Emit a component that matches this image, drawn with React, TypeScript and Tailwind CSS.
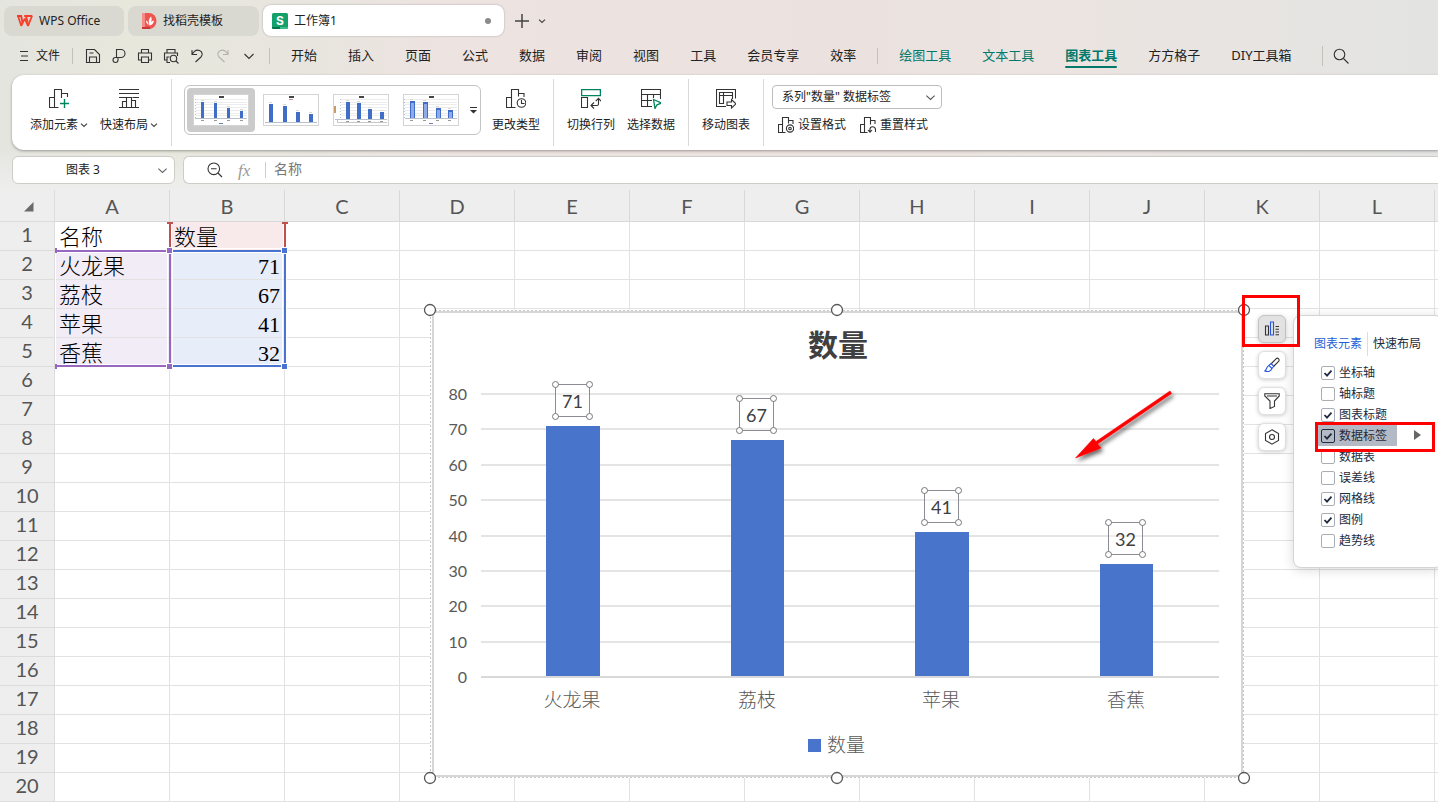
import React from "react";

const UI = "font-['Noto_Sans','Noto_Sans_CJK_SC',sans-serif]";

type Kids = { children: React.ReactNode };

function Ico({ size = 20, stroke = "#333", className = "", children }: Kids & { size?: number; stroke?: string; className?: string }) {
  return (
    <svg aria-hidden="true" width={size} height={size} viewBox={`0 0 ${size} ${size}`} fill="none" stroke={stroke} strokeWidth="1.1" className={`shrink-0 ${className}`}>
      {children}
    </svg>
  );
}

function Chevron({ size = 8, stroke = "#444" }: { size?: number; stroke?: string }) {
  return (
    <svg aria-hidden="true" width={size} height={size} viewBox="0 0 8 8" fill="none" stroke={stroke} strokeWidth={size > 8 ? 0.8 : 1.2} className="shrink-0">
      <path d="M1 2.6 4 5.4 7 2.6" />
    </svg>
  );
}

/* ---------- title tabs ---------- */

function TitleTabs() {
  return (
    <div className="flex h-9 items-end gap-1 pl-1 text-xs text-[#222]">
      <button className="flex h-[30px] w-[120px] items-center gap-1.5 rounded-lg bg-[#d9d9d2] pl-[13px]">
        <svg aria-hidden="true" width="16" height="12" viewBox="0 0 16 12" className="shrink-0" fill="none" strokeWidth="1.8">
          <path d="M0 1h4.2L5.6 8" stroke="#f5382c" />
          <path d="M1 .8 4.2 10.8 7.8 3.6 11 10.8 15 1H7.2" stroke="#f6402b" strokeLinejoin="bevel" />
          <path d="M9 1.2 10.8 7.6" stroke="#f6402b" />
        </svg>
        WPS Office
      </button>
      <button className="flex h-[30px] w-[131px] items-center gap-1.5 rounded-lg bg-[#d9d8d1] pl-[14px]">
        <svg aria-hidden="true" width="15" height="16" viewBox="0 0 15 16" className="shrink-0">
          <path d="M0 0h7a7.5 8 0 0 1 0 16H0z" fill="#f0544f" />
          <path d="M0 0h3v16H0z" fill="#f58c88" />
          <path d="M0 14h8v2H0z" fill="#c93936" />
          <path d="M7.6 12.5C6 9.5 6.500 6 9 3.500c1 2 .8 4 0 5.500 1-.9 1.800-1.300 3-1.500-.4 3-2 4.800-4.400 5z" fill="#fff" />
          <path d="M6.500 12C5 11 4.200 9.500 4 7.500c1.400.5 2.200 2 2.500 4.500z" fill="#fff" />
        </svg>
        找稻壳模板
      </button>
      <button className="flex h-[31px] w-[241px] items-center gap-1.5 rounded-lg bg-white pr-[13px] pl-[9px] shadow-[0_0_2px_rgba(0,0,0,0.3)]">
        <svg aria-hidden="true" width="16" height="16" viewBox="0 0 16 16" className="shrink-0">
          <rect width="16" height="16" rx="1.500" fill="#14a06b" />
          <path d="M0 14h8v2H1.500A1.500 1.500 0 0 1 0 14.500z" fill="#07734b" />
          <path d="M8 14h8v.5a1.500 1.500 0 0 1-1.500 1.500H8z" fill="#3dba8a" />
          <text x="8" y="11.500" textAnchor="middle" fill="#fff" className="font-['Inter',sans-serif] text-[12px] font-bold">S</text>
        </svg>
        <span className="flex-1 text-left">工作簿1</span>
        <span className="size-1.5 rounded-full bg-[#8a8a8a]" />
      </button>
      <button aria-label="新建" className="ml-1 flex h-[30px] w-5 items-center justify-center">
        <svg aria-hidden="true" width="14" height="14" viewBox="0 0 14 14" stroke="#444" strokeWidth="1.5"><path d="M7 0v14M0 7h14" /></svg>
      </button>
      <button aria-label="标签列表" className="flex h-[30px] w-3 items-center justify-center"><Chevron /></button>
    </div>
  );
}

/* ---------- menu bar ---------- */

const quickIcons: { label: string; icon: React.ReactNode }[] = [
  { label: "保存", icon: <Ico size={16}><path d="M1.500 1.500h8l5 5v8h-13zM4.500 14.500V9h7v5.500M4.500 5h4" /></Ico> },
  { label: "输出", icon: <Ico size={16}><path d="M5.500 9.500V1.500h4.500a4 4 0 0 1 0 8H4.500a2.500 2.500 0 1 0 2.500 2.500V9.500" /></Ico> },
  { label: "打印", icon: <Ico size={16}><path d="M4.500 5V1.500h7V5M4.500 12h-3V5h13v7h-3M4.500 9h7v5.500h-7z" /></Ico> },
  { label: "打印预览", icon: <Ico size={16}><path d="M4 5V1.500h8V5M4 12H1.500V5h13v3M7 14.500H4V9h2.500" /><circle cx="10.500" cy="10.500" r="3.200" /><path d="m13 13 2.500 2.500" /></Ico> },
  { label: "撤销", icon: <Ico size={16}><path d="M3 2v4.500h5M3 6.500C5 3 8 1.500 10.500 2.500c3 1.200 3.500 4.500 1.500 6.500l-5.500 5" /></Ico> },
  { label: "恢复", icon: <Ico size={16} stroke="#b4b2ae"><path d="M13 2v4.500H8M13 6.500C11 3 8 1.500 5.500 2.500c-3 1.200-3.500 4.500-1.500 6.500l5.500 5" /></Ico> },
  { label: "更多", icon: <Ico size={16}><path d="m3.500 6 4.500 4.500L12.500 6" /></Ico> },
];

const menus = ["开始", "插入", "页面", "公式", "数据", "审阅", "视图", "工具", "会员专享", "效率"];

function MenuBar() {
  return (
    <div className="flex h-[39px] items-center text-[13px] whitespace-nowrap text-[#222]">
      <button className="ml-5 flex items-center gap-2 text-xs">
        <svg aria-hidden="true" width="8" height="12" viewBox="0 0 8 12" stroke="#333" strokeWidth="1"><path d="M0 1.500h8M1 6h7M0 10.500h8" /></svg>
        文件
      </button>
      <span className="ml-3 h-4 w-px bg-[#c4c1bc]" />
      <div className="ml-3 flex gap-2.5">
        {quickIcons.map((q) => (
          <button key={q.label} aria-label={q.label}>{q.icon}</button>
        ))}
      </div>
      <span className="ml-3 h-4 w-px bg-[#c4c1bc]" />
      <nav className="ml-[21px] flex items-center gap-[31px]">
        {menus.map((m) => (
          <button key={m}>{m}</button>
        ))}
      </nav>
      <span className="mx-[21px] h-4 w-px bg-[#c4c1bc]" />
      <nav className="flex items-center gap-[31px]">
        <button className="text-[#00796b]">绘图工具</button>
        <button className="text-[#00796b]">文本工具</button>
        <button className="relative font-bold text-[#00796b] after:absolute after:inset-x-0 after:-bottom-[3px] after:h-0.5 after:rounded-full after:bg-[#00796b]">图表工具</button>
        <button>方方格子</button>
        <button>DIY工具箱</button>
      </nav>
      <span className="ml-[30px] h-5 w-px bg-[#c4c1bc]" />
      <button aria-label="搜索" className="ml-2.5">
        <Ico size={16}><circle cx="6.500" cy="6.500" r="5.300" /><path d="m10.500 10.500 5 5" /></Ico>
      </button>
    </div>
  );
}

/* ---------- ribbon ---------- */

function BigButton({ icon, label, menu }: { icon: React.ReactNode; label: string; menu?: boolean }) {
  return (
    <button className="flex flex-col items-center gap-[7px] whitespace-nowrap">
      {icon}
      <span className="flex items-center gap-0.5 leading-[18px]">
        {label}
        {menu && <Chevron />}
      </span>
    </button>
  );
}

function Divider() {
  return <span className="mx-[13px] my-1 w-px self-stretch bg-[#d9d9d9]" />;
}

type ThumbSpec = { xs: number[]; tops: number[]; base: number; width: number; grid: boolean };

const thumbs: ThumbSpec[] = [
  { xs: [8, 21, 34, 47], tops: [8, 9, 14, 17], base: 24, width: 3, grid: true },
  { xs: [6, 20, 33, 46], tops: [10, 12, 18, 20], base: 28, width: 4, grid: false },
  { xs: [13, 24, 35, 47], tops: [8, 9, 15, 18], base: 25, width: 4, grid: true },
  { xs: [7, 20, 33, 45], tops: [7, 8, 14, 16], base: 24, width: 5, grid: true },
];

function Thumb({ kind }: { kind: number }) {
  const { xs, tops, base, width, grid } = thumbs[kind];
  return (
    <svg aria-hidden="true" width="56" height="32" viewBox="0 0 56 32" shapeRendering="crispEdges">
      <rect x="0.5" y="0.5" width="55" height="31" fill="#fff" stroke="#d4d4d4" />
      {grid && [5, 8, 10, 13, 16, 19, 21].map((y) => (
        <path key={y} d={`M${xs[0] - 5} ${y + 0.5}H54`} stroke="#ececec" />
      ))}
      {grid && <path d={`M${xs[0] - 5.5} 5V${base}`} stroke="#b4c0d8" strokeDasharray="1 2" />}
      {kind === 2 && <path d="M2 12v7" stroke="#c99a6b" strokeWidth="2" />}
      <path d="M26 2.500h5" stroke="#444" strokeWidth="2" />
      {kind === 1 && <path d="M26 5.500h4" stroke="#b99" />}
      {xs.map((x, i) => (
        <g key={x}>
          <rect x={x} y={tops[i]} width={width} height={base - tops[i]} fill="#3f6dc8" />
          {kind === 3 && <rect x={x + 1} y={tops[i] + 2} width="3" height={base - tops[i] - 2} fill="#8eabe6" />}
          <path d={`M${x} ${tops[i] - 1.5}h3`} stroke="#d8d8d8" />
          {kind !== 1 && <path d={`M${x} ${base + 2.5}h3`} stroke="#999" />}
        </g>
      ))}
      <path d={`M2 ${base + 0.5}H54`} stroke="#b8c0cc" />
      {kind === 2 && <path d="M4 28.500H54M4.500 26v3" stroke="#c8c8c8" />}
      {(kind === 0 || kind === 3) && <path d="M26 29.500h4" stroke="#6a7fae" />}
    </svg>
  );
}

function Ribbon() {
  return (
    <div className="ml-3 flex h-[75px] items-stretch rounded-l-xl bg-white pl-[18px] text-xs text-[#222] shadow-[0_1px_3px_rgba(0,0,0,0.35)]">
      <div className="flex items-center gap-3 pb-[3px]">
        <BigButton menu label="添加元素" icon={
          <Ico><path d="M.5 8.500h5v10h-5zM5.500 18.500V.5h7v8.500M12.500 4.500h6V8M5.500 18.500h4" /><path d="M15.500 10v9M11 14.500h9" stroke="#00845f" strokeWidth="1.400" /></Ico>
        } />
        <BigButton menu label="快速布局" icon={
          <Ico><path d="M0 .5h20M0 4.500h20M0 8.500h7.500M13.500 8.500H20M0 18.500h20M3.500 18.500V12.500h4M7.500 18.500V8.500h5v10M12.500 11.500h4v7" /></Ico>
        } />
      </div>
      <Divider />
      <div className="-ml-px flex items-center">
        <div className="mb-[5px] flex h-[50px] items-center rounded-md border border-[#c4c4c4] pl-0.5">
          {[0, 1, 2, 3].map((k) => (
            <button key={k} aria-label={`图表样式 ${k + 1}`} className={k === 0 ? "mr-px rounded bg-[#cbcbcb] px-1.5 py-1.5" : "px-[7px] py-1.5"}>
              <Thumb kind={k} />
            </button>
          ))}
          <button aria-label="更多样式" className="flex h-full w-[14px] items-center justify-center">
            <svg aria-hidden="true" width="7" height="7" viewBox="0 0 7 7" fill="#333"><path d="M0 0h7v1H0zM0 3h7L3.500 6.500z" /></svg>
          </button>
        </div>
        <div className="ml-[11px] pb-[3px]">
          <BigButton label="更改类型" icon={
            <Ico><path d="M.5 8.500h5v10h-5zM5.500 18.500V.5h7v7M12.500 4.500h5.500V8M5.500 18.500h4" /><circle cx="15.500" cy="14" r="4.300" /><path d="M15.500 11v3.500h3" /></Ico>
          } />
        </div>
      </div>
      <Divider />
      <div className="flex items-center gap-3 pb-[3px]">
        <BigButton label="切换行列" icon={
          <Ico><path d="M.6.6h18.800v6H.6z" stroke="#00845f" strokeWidth="1.300" /><path d="M.5 8.500h6v10h-6zM17.500 9.500v5.500a1.500 1.500 0 0 1-1.500 1.500H10.500M13 13.500l-3 3 3 3M14.700 12.200l2.800-2.900 2.500 2.900" /></Ico>
        } />
        <BigButton label="选择数据" icon={
          <Ico><path d="M19.500 10V.5H.5v17H11M.5 5.500h19M.5 11.500H11M6.500 5.500v12M12.500 5.500V9" /><path d="m12.500 10.500 8 3.500-4.500 1.800-2 3.700z" stroke="#00845f" strokeWidth="1.300" fill="#fff" /></Ico>
        } />
      </div>
      <Divider />
      <div className="flex items-center pb-[3px]">
        <BigButton label="移动图表" icon={
          <Ico><path d="M19.500 9.500V.5H.5v17H10M3.500 3.500h13v3H3.500zM7.500 3.500v11h-4v-11M16.500 6.500V10" /><path d="M11 13h4.500v-2.500L20 14.800 15.500 19v-2.500H11z" /></Ico>
        } />
      </div>
      <Divider />
      <div className="-ml-[5px] flex flex-col pt-[10px]">
        <div className="relative flex w-[170px] items-center">
          <select aria-label="图表对象" className="h-6 w-full appearance-none rounded border border-[#bdbdbd] bg-white pl-[9px] text-xs">
            <option>系列"数量" 数据标签</option>
          </select>
          <span className="pointer-events-none absolute right-1.5 flex"><Chevron size={11} stroke="#555" /></span>
        </div>
        <div className="mt-2 flex items-center gap-3.5 pl-1.5 whitespace-nowrap">
          <button className="flex items-center gap-1">
            <Ico size={16}><path d="M.5 7.500h4v8h-4zM4.500 15.500V.5h6v6M10.500 3.500h4.500V7M4.500 15.500h3" /><circle cx="12" cy="11.500" r="3.600" /><circle cx="12" cy="11.500" r="1.300" /></Ico>
            设置格式
          </button>
          <button className="flex items-center gap-1">
            <Ico size={16}><path d="M.5 7.500h4v8h-4zM4.500 15.500V.5h6v7M10.500 3.500h4.500V7M4.500 15.500h3M15.500 15v-2.500a2.800 2.800 0 0 0-5.600 0v2.500M8 13l2 2.200 2-2.200" /></Ico>
            重置样式
          </button>
        </div>
      </div>
    </div>
  );
}

/* ---------- formula bar ---------- */

function FormulaBar() {
  return (
    <div className="flex h-10 items-start gap-2 pt-1.5 pl-3 text-xs text-[#222]">
      <div className="flex h-7 w-[163px] items-center rounded-md border border-[#cfccc8] bg-white pr-1.5">
        <input aria-label="名称框" defaultValue="图表 3" className="min-w-0 flex-1 bg-transparent pr-1 text-center outline-none" />
        <Chevron size={11} stroke="#666" />
      </div>
      <div className="flex h-7 flex-1 items-center rounded-l-md border border-r-0 border-[#cfccc8] bg-white pl-[23px]">
        <Ico size={16}><circle cx="6.800" cy="6.800" r="5.800" /><path d="m11 11 4 4M4 6.800h5.600" /></Ico>
        <span className="ml-[15px] w-[15px] font-['Liberation_Serif',serif] text-[17px] leading-none text-[#999] italic">fx</span>
        <span className="ml-3 h-4 w-px bg-[#ccc]" />
        <input aria-label="编辑栏" defaultValue="名称" className="ml-2 min-w-0 flex-1 bg-transparent pb-0.5 text-[14px] text-[#777] outline-none" />
      </div>
    </div>
  );
}

/* ---------- sheet ---------- */

const columns = ["A", "B", "C", "D", "E", "F", "G", "H", "I", "J", "K", "L"];
const rows: [string, string][] = [["名称", "数量"], ["火龙果", "71"], ["荔枝", "67"], ["苹果", "41"], ["香蕉", "32"]];

function cellFill(r: number, c: number) {
  if (c === 1 && r === 0) return "bg-[#f8eaea]";
  if (c === 0 && r >= 1 && r <= 4) return "bg-[#f2ecf7]";
  if (c === 1 && r >= 1 && r <= 4) return "bg-[#e8edfa]";
  return "";
}

function Grid() {
  return (
    <table className="w-full min-w-[1438px] table-fixed border-separate border-spacing-0">
      <colgroup>
        <col className="w-[55px]" />
        {columns.map((c) => <col key={c} className="w-[115px]" />)}
        <col />
      </colgroup>
      <thead>
        <tr className="h-8 bg-[#eee] font-['Lato',sans-serif] text-[20px] text-[#555]">
          <th aria-label="全选" className="border-r border-b border-[#dcdcdc] p-0">
            <svg aria-hidden="true" width="10" height="10" viewBox="0 0 10 10" className="mt-0.5 ml-6"><path d="M9.500 0v9.500H0z" fill="#6a6a6a" /></svg>
          </th>
          {columns.map((c) => (
            <th key={c} className="border-r border-b border-[#d8d8d8] p-0 leading-none font-normal">{c}</th>
          ))}
          <td className="border-b border-[#d8d8d8] p-0" />
        </tr>
      </thead>
      <tbody>
        {Array.from({ length: 20 }, (_, r) => (
          <tr key={r} className="h-[29px]">
            <th className="border-r border-b border-[#dcdcdc] bg-[#eee] p-0 pb-1 font-['Lato',sans-serif] text-[20px] leading-6 font-normal text-[#555]">{r + 1}</th>
            {columns.map((c, i) => (
              <td key={c} className={`border-r border-b border-[#e2e2e2] px-1 py-0 align-bottom font-['Liberation_Serif','Noto_Sans_CJK_SC',serif] text-[22px] leading-6 font-light text-black ${i === 1 && r > 0 ? "text-right" : ""} ${cellFill(r, i)}`}>
                {i < 2 && rows[r] ? rows[r][i] : null}
              </td>
            ))}
            <td className="border-b border-[#e2e2e2] p-0" />
          </tr>
        ))}
      </tbody>
    </table>
  );
}

/* Coloured outlines round the chart's source ranges. */
function RangeMarks() {
  return (
    <svg aria-hidden="true" width="240" height="155" viewBox="0 0 240 155" className="pointer-events-none absolute top-8 left-[54px]" shapeRendering="crispEdges">
      <path d="M117.500 1v24M229.500 1v24" stroke="#fff" />
      <path d="M116 1v24M231 1v24" stroke="#c0504d" strokeWidth="2" />
      <path d="M113 1h6M228 1h6" stroke="#c0504d" strokeWidth="2" />
      <path d="M2 26.500h113M2 30.500h112M2 142.500h112M2 146.500h113" stroke="#fff" />
      <path d="M1.500 29v116M113.500 31v112M118.500 31v112M228.500 31v112M232.500 31v112M118 26.500h110M118 30.500h110M118 142.500h110" stroke="#fff" />
      <path d="M2 29h114v115H2" fill="none" stroke="#9668c0" strokeWidth="2" />
      <path d="M2 26v5M2 142v5" stroke="#9668c0" strokeWidth="2" />
      <path d="M118 29h113v115H118" fill="none" stroke="#4a72d0" strokeWidth="2" />
      <path d="M112 25h7v7h-7zM112 141h7v7h-7zM227 25h7v7h-7zM227 141h7v7h-7z" fill="#fff" />
      <path d="M113 26h5v5h-5zM113 142h5v5h-5z" fill="#9668c0" />
      <path d="M228 26h5v5h-5zM228 142h5v5h-5z" fill="#4a72d0" />
    </svg>
  );
}

const chartData = [
  { name: "火龙果", value: 71 },
  { name: "荔枝", value: 67 },
  { name: "苹果", value: 41 },
  { name: "香蕉", value: 32 },
];

/* Origin of the drawing is the outer top-left selection handle. */
function Chart() {
  const y0 = 373;
  const yOf = (v: number) => Math.round(y0 - v * 3.5375);
  const handles = [[7, 7], [414, 7], [821, 7], [7, 475], [414, 475], [821, 475]];
  return (
    <svg role="img" aria-label="数量 柱形图" width="828" height="482" viewBox="0 0 828 482" className="absolute top-[113px] left-[423px]">
      <defs>
        <filter id="arrow-shadow" x="-20%" y="-20%" width="150%" height="150%">
          <feDropShadow dx="2" dy="3" stdDeviation="2" floodColor="#000" floodOpacity="0.6" />
        </filter>
      </defs>
      <g shapeRendering="crispEdges">
        <rect x="7" y="7" width="814" height="468" fill="#fff" />
        <rect x="7.500" y="7.500" width="813" height="467" fill="none" stroke="#c8c8c8" strokeDasharray="2 2" />
        <rect x="10" y="9" width="809" height="464" fill="#fff" stroke="#d6d6d6" strokeWidth="2" />
        {[10, 20, 30, 40, 50, 60, 70, 80].map((v) => (
          <rect key={v} x="58" y={yOf(v)} width="738" height="2" fill="#e4e4e4" />
        ))}
        {chartData.map((d, i) => (
          <rect key={d.name} x={Math.round(123 + i * 184.6)} y={yOf(d.value) + 1} width={i % 2 ? 53 : 54} height={y0 - yOf(d.value) - 1} fill="#4874cb" />
        ))}
        <rect x="58" y="373" width="738" height="2" fill="#d9d9d9" />
      </g>
      <text x="415" y="53" textAnchor="middle" className="fill-[#404040] font-['Noto_Sans_CJK_SC',sans-serif] text-[30px] font-bold">数量</text>
      <g className="fill-[#595959] font-['Lato',sans-serif] text-[16px]">
        {[0, 10, 20, 30, 40, 50, 60, 70, 80].map((v) => (
          <text key={v} x="44" y={yOf(v) + 7} textAnchor="end">{v}</text>
        ))}
      </g>
      <g className="fill-[#595959] font-['Noto_Sans_CJK_SC',sans-serif] text-[19px] font-light">
        {chartData.map((d, i) => (
          <text key={d.name} x={Math.round(149 + i * 184.6)} y="404" textAnchor="middle">{d.name}</text>
        ))}
        <text x="404" y="449">数量</text>
      </g>
      <rect x="385" y="436" width="13" height="13" fill="#4874cb" />
      {chartData.map((d, i) => {
        const x = Math.floor(132 + i * 184.5) + 0.5;
        const y = yOf(d.value) - 40.5;
        return (
          <g key={d.name} stroke="#8c8c94" fill="#fff">
            <rect x={x} y={y} width="34" height="32" fillOpacity="0.4" />
            {[[0, 0], [34, 0], [0, 32], [34, 32]].map(([dx, dy]) => (
              <circle key={`${dx}-${dy}`} cx={x + dx} cy={y + dy} r="3" stroke="#777" />
            ))}
            <text x={x + 17} y={y + 23} textAnchor="middle" stroke="none" className="fill-[#404040] font-['Lato',sans-serif] text-[18px]">{d.value}</text>
          </g>
        );
      })}
      <g filter="url(#arrow-shadow)" fill="#ff0000">
        <path d="M747 88 748.500 90.500 674.500 141 678 145 652.500 155 670.500 135.500 673 138.500z" stroke="#ff0000" strokeWidth="0.6" />
      </g>
      {handles.map(([x, y]) => (
        <circle key={`${x}-${y}`} cx={x} cy={y} r="5.500" fill="#fff" stroke="#555" strokeWidth="1.300" />
      ))}
    </svg>
  );
}

const tools: { label: string; icon: React.ReactNode }[] = [
  { label: "图表元素", icon: <Ico size={16}><path d="M1.500 5h3v9h-3z" /><path d="M6.500 1h3v13h-3z" stroke="#2456e0" /><path d="M11.500 5.500H15M11.500 8.300H15M11.500 11H15M11.500 13.800H15" /></Ico> },
  { label: "图表样式", icon: <Ico size={16}><path d="m7 7 5-5.200a1.800 1.800 0 0 1 2.600 2.600L9.500 9.500" /><path d="M7 6.500 9.800 9.300 8 11.500 4.800 8.500zM5 8.500C2.500 9 3 12.500.8 14c3 1 6.500.5 7-2.800" stroke="#2456e0" /></Ico> },
  { label: "图表筛选", icon: <Ico size={16}><path d="M.8 .8h14.400v2.200L10.500 8v5.500L6 15.500V8L.8 3zM3 3h10" /></Ico> },
  { label: "设置", icon: <Ico size={16}><path d="m8 .8 6.500 3.700v7L8 15.200l-6.500-3.700v-7z" /><circle cx="8" cy="8" r="2.500" /></Ico> },
];

const elements: [string, boolean][] = [
  ["坐标轴", true], ["轴标题", false], ["图表标题", true], ["数据标签", true], ["数据表", false],
  ["误差线", false], ["网格线", true], ["图例", true], ["趋势线", false],
];

function ElementPanel() {
  return (
    <div className="absolute top-[125px] left-[1293px] w-[150px] rounded-lg border border-[#d4d4d4] bg-white py-4 text-xs text-[#222b3d] shadow-[0_2px_12px_rgba(0,0,0,0.15)]">
      <div className="flex h-6 items-center pl-5 whitespace-nowrap">
        <button className="text-[#1f5fd6]">图表元素</button>
        <span className="mx-[5px] h-6 w-px bg-[#ddd]" />
        <button>快速布局</button>
      </div>
      <ul className="mt-1.5">
        {elements.map(([name, on]) => {
          const active = name === "数据标签";
          return (
            <li key={name} className="flex h-[21px] items-center pl-6">
              <label className={`flex h-[21px] items-center gap-1 pl-[3px] whitespace-nowrap ${active ? "w-[79px] bg-[#b4bac5]" : ""}`}>
                <span className="relative flex size-3.5">
                  <input type="checkbox" defaultChecked={on} className={`peer size-3.5 appearance-none rounded-xs border ${active ? "border-[#222b3d]" : "border-[#a9adb5] bg-white"}`} />
                  <svg aria-hidden="true" width="14" height="14" viewBox="0 0 14 14" fill="none" stroke="#222b3d" strokeWidth="1.800" className="pointer-events-none absolute inset-0 hidden peer-checked:block"><path d="m3.500 7 2.500 2.600 4.500-5" /></svg>
                </span>
                {name}
              </label>
              {active && <svg aria-hidden="true" width="7" height="10" viewBox="0 0 7 10" className="mb-0.5 ml-[17px]"><path d="M0 0v10l7-5z" fill="#666" /></svg>}
            </li>
          );
        })}
      </ul>
    </div>
  );
}

export default function App() {
  return (
    <div className={`flex h-screen flex-col overflow-hidden bg-[#eee] ${UI}`}>
      <header className="relative z-10 bg-[linear-gradient(90deg,#e5e5e0_0%,#e7e7dc_9%,#e8e5df_22%,#ede3e0_31%,#ebe2df_60%,#ece4e1_72%,#e3e4e2_100%)]">
        <TitleTabs />
        <MenuBar />
        <Ribbon />
        <div className="bg-linear-to-b from-transparent to-[#eee]">
          <FormulaBar />
        </div>
      </header>
      <main className="relative min-h-0 flex-1 overflow-hidden bg-white">
        <Grid />
        <RangeMarks />
        <Chart />
        <div className="absolute top-[125px] left-[1258px] flex flex-col gap-2">
          {tools.map((t, i) => (
            <button key={t.label} aria-label={t.label} className={`flex size-7 items-center justify-center rounded-md border shadow-[0_1px_4px_rgba(0,0,0,0.2)] ${i === 0 ? "border-[#c4c4c4] bg-[#e2e2e2]" : "border-[#e0e0e0] bg-white"}`}>
              {t.icon}
            </button>
          ))}
        </div>
        <ElementPanel />
        <div className="pointer-events-none absolute top-[105px] left-[1242px] h-[52px] w-[58px] border-3 border-[#ff0000]" />
        <div className="pointer-events-none absolute top-[232px] left-[1315px] h-[30px] w-[120px] border-3 border-[#ff0000]" />
      </main>
    </div>
  );
}
